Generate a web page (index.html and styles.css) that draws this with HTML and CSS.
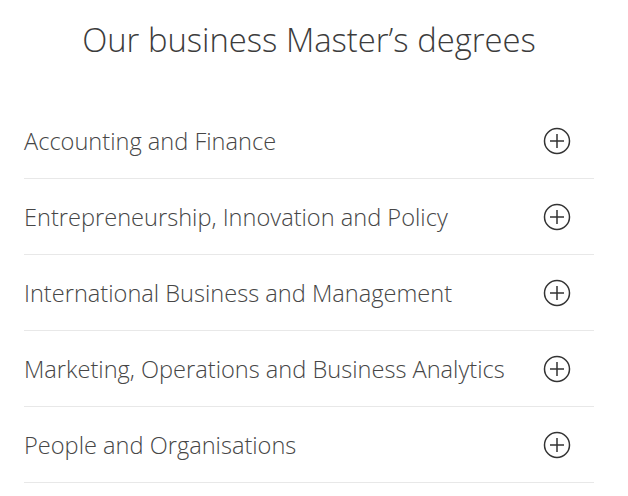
FILE: index.html
```html
<!DOCTYPE html>
<html>
<head>
<meta charset="utf-8">
<link rel="stylesheet" href="styles.css">
</head>
<body>
<div class="wrap">
  <h1 class="title">Our business Master’s degrees</h1>
  <ul class="list">
    <li class="row"><span class="label">Accounting and Finance</span><svg class="icon" viewBox="0 0 28 28"><circle cx="14" cy="14" r="12.5"/><path d="M14 7v14M7 14h14"/></svg></li>
    <li class="row"><span class="label">Entrepreneurship, Innovation and Policy</span><svg class="icon" viewBox="0 0 28 28"><circle cx="14" cy="14" r="12.5"/><path d="M14 7v14M7 14h14"/></svg></li>
    <li class="row"><span class="label">International Business and Management</span><svg class="icon" viewBox="0 0 28 28"><circle cx="14" cy="14" r="12.5"/><path d="M14 7v14M7 14h14"/></svg></li>
    <li class="row"><span class="label">Marketing, Operations and Business Analytics</span><svg class="icon" viewBox="0 0 28 28"><circle cx="14" cy="14" r="12.5"/><path d="M14 7v14M7 14h14"/></svg></li>
    <li class="row"><span class="label">People and Organisations</span><svg class="icon" viewBox="0 0 28 28"><circle cx="14" cy="14" r="12.5"/><path d="M14 7v14M7 14h14"/></svg></li>
  </ul>
</div>
</body>
</html>
```
FILE: styles.css
```css
html, body {
  margin: 0;
  padding: 0;
  background: #fff;
}
body {
  font-family: "Open Sans", "Liberation Sans", sans-serif;
  color: #444;
}
.wrap {
  padding: 0 34px 0 24px;
}
.title {
  margin: 16px 0 0 0;
  font-size: 32.8px;
  font-weight: 300;
  line-height: 48px;
  text-align: center;
  color: #3c3c3c;
}
.list {
  list-style: none;
  margin: 39px 0 0 0;
  padding: 0;
}
.row {
  display: flex;
  align-items: center;
  justify-content: space-between;
  height: 75px;
  border-bottom: 1px solid #e8e8e8;
}
.label {
  font-size: 23.6px;
  font-weight: 300;
  color: #464646;
}
.icon {
  width: 28px;
  height: 28px;
  margin-right: 23px;
  fill: none;
  stroke: #333;
  stroke-width: 1.5;
}
```
